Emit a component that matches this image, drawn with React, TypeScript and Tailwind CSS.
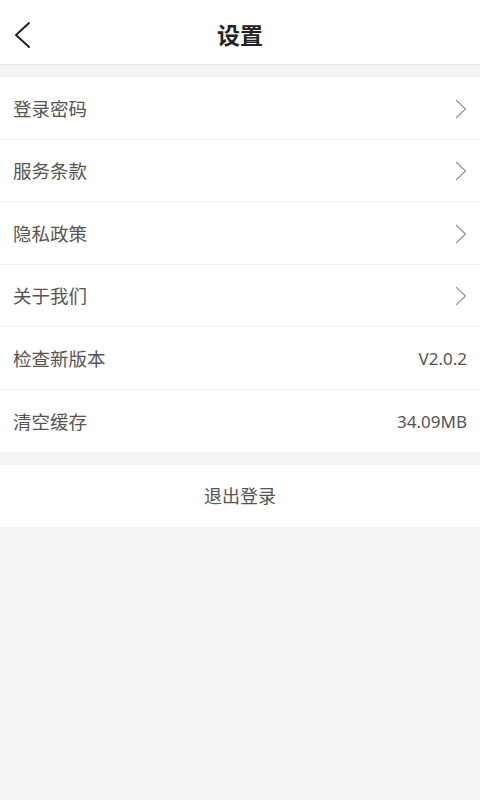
const rows: { label: string; value?: string }[] = [
  { label: '登录密码' },
  { label: '服务条款' },
  { label: '隐私政策' },
  { label: '关于我们' },
  { label: '检查新版本', value: 'V2.0.2' },
  { label: '清空缓存', value: '34.09MB' },
]

export default function App() {
  return (
    <div
      className="flex min-h-[800px] flex-col bg-[#f4f3f6]"
      style={{ fontFamily: '"Noto Sans", "Noto Sans CJK SC", sans-serif' }}
    >
      <div className="relative flex h-[65px] items-center justify-center border-b border-[#e4e4e4] bg-white pt-[6px]">
        <svg className="absolute left-[12px] top-[20px]" width="22" height="30" viewBox="0 0 22 30" fill="none">
          <polyline points="17,3 4,15 17,27" stroke="#222" strokeWidth="2" strokeLinecap="round" strokeLinejoin="round" />
        </svg>
        <span className="text-[23px] font-bold text-[#222]">设置</span>
      </div>
      <div className="mt-[12px] bg-white">
        {rows.map((r, i) => (
          <div
            key={r.label}
            className={`flex h-[62.5px] items-center justify-between pl-[13px] pr-[13px] ${i < rows.length - 1 ? 'border-b border-[#f1f1f1]' : ''}`}
          >
            <span className="pt-[2px] text-[18.5px] text-[#555]">{r.label}</span>
            {r.value ? (
              <span className="pt-[2px] text-[17px] text-[#555]">{r.value}</span>
            ) : (
              <svg className="mt-[2px]" width="12" height="20" viewBox="0 0 12 20" fill="none">
                <polyline points="1.5,1.5 10.5,10 1.5,18.5" stroke="#999" strokeWidth="1.3" strokeLinecap="round" strokeLinejoin="round" />
              </svg>
            )}
          </div>
        ))}
      </div>
      <div className="mt-[13px] flex h-[62px] items-center justify-center bg-white">
        <span className="text-[18px] text-[#555]">退出登录</span>
      </div>
    </div>
  )
}
